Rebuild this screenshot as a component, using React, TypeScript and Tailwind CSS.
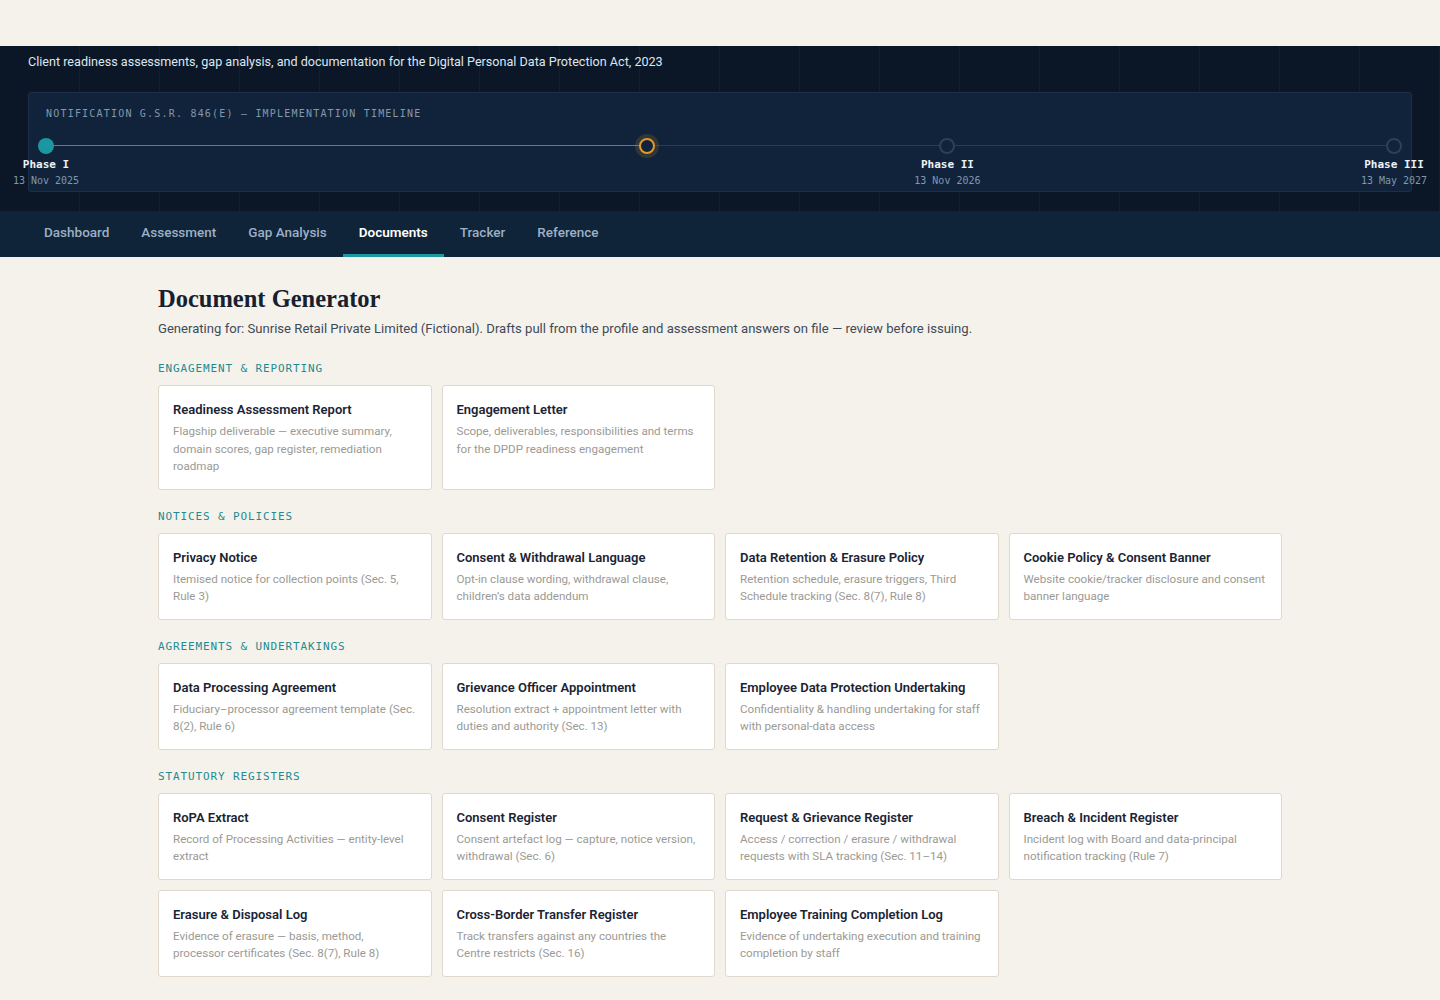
import React from 'react'

const sans = "font-['Roboto','Liberation_Sans',sans-serif]"
const mono = "font-['DejaVu_Sans_Mono','Liberation_Mono',monospace]"
const serif = "font-['Liberation_Serif','DejaVu_Serif',serif]"

const tabs = ['Dashboard', 'Assessment', 'Gap Analysis', 'Documents', 'Tracker', 'Reference']

const milestones = [
  { pos: 0, kind: 'done', label: 'Phase I', date: '13 Nov 2025' },
  { pos: 44.58, kind: 'now' },
  { pos: 66.87, kind: 'todo', label: 'Phase II', date: '13 Nov 2026' },
  { pos: 100, kind: 'todo', label: 'Phase III', date: '13 May 2027' },
]

const sections = [
  {
    label: 'Engagement & Reporting',
    docs: [
      { title: 'Readiness Assessment Report', desc: 'Flagship deliverable — executive summary, domain scores, gap register, remediation roadmap' },
      { title: 'Engagement Letter', desc: 'Scope, deliverables, responsibilities and terms for the DPDP readiness engagement' },
    ],
  },
  {
    label: 'Notices & Policies',
    docs: [
      { title: 'Privacy Notice', desc: 'Itemised notice for collection points (Sec. 5, Rule 3)' },
      { title: 'Consent & Withdrawal Language', desc: 'Opt-in clause wording, withdrawal clause, children’s data addendum' },
      { title: 'Data Retention & Erasure Policy', desc: 'Retention schedule, erasure triggers, Third Schedule tracking (Sec. 8(7), Rule 8)' },
      { title: 'Cookie Policy & Consent Banner', desc: 'Website cookie/tracker disclosure and consent banner language' },
    ],
  },
  {
    label: 'Agreements & Undertakings',
    docs: [
      { title: 'Data Processing Agreement', desc: 'Fiduciary–processor agreement template (Sec. 8(2), Rule 6)' },
      { title: 'Grievance Officer Appointment', desc: 'Resolution extract + appointment letter with duties and authority (Sec. 13)' },
      { title: 'Employee Data Protection Undertaking', desc: 'Confidentiality & handling undertaking for staff with personal-data access' },
    ],
  },
  {
    label: 'Statutory Registers',
    docs: [
      { title: 'RoPA Extract', desc: 'Record of Processing Activities — entity-level extract' },
      { title: 'Consent Register', desc: 'Consent artefact log — capture, notice version, withdrawal (Sec. 6)' },
      { title: 'Request & Grievance Register', desc: 'Access / correction / erasure / withdrawal requests with SLA tracking (Sec. 11–14)' },
      { title: 'Breach & Incident Register', desc: 'Incident log with Board and data-principal notification tracking (Rule 7)' },
      { title: 'Erasure & Disposal Log', desc: 'Evidence of erasure — basis, method, processor certificates (Sec. 8(7), Rule 8)' },
      { title: 'Cross-Border Transfer Register', desc: 'Track transfers against any countries the Centre restricts (Sec. 16)' },
      { title: 'Employee Training Completion Log', desc: 'Evidence of undertaking execution and training completion by staff' },
    ],
  },
]

function Timeline() {
  return (
    <div className="mt-[20px] rounded-[3px] border border-[#1b3048] bg-[#10233a] px-[17px] pt-[15px] pb-[4px]">
      <div className={`${mono} text-[10px] leading-[12px] tracking-[0.12em] text-[#8497ab]`}>
        NOTIFICATION G.S.R. 846(E) — IMPLEMENTATION TIMELINE
      </div>
      <div className="relative mt-[18px] h-[49px]">
        <div className="absolute left-0 right-0 top-[7px] h-px bg-[#293d54]" />
        <div className="absolute left-0 top-[7px] h-px w-[44.58%] bg-[#1d98a0]" />
        {milestones.map((m, i) => (
          <div key={i} className="absolute top-0" style={{ left: `${m.pos}%` }}>
            {m.kind === 'done' && (
              <div className="h-4 w-4 -translate-x-1/2 rounded-full bg-[#1c979f]" />
            )}
            {m.kind === 'now' && (
              <div className="-mt-1 flex h-6 w-6 -translate-x-1/2 items-center justify-center rounded-full bg-[rgba(224,154,43,0.16)]">
                <div className="h-4 w-4 rounded-full border-2 border-[#e09a2b] bg-[#10233a]" />
              </div>
            )}
            {m.kind === 'todo' && (
              <div className="h-4 w-4 -translate-x-1/2 rounded-full border-2 border-[#2c405a] bg-[#10233a]" />
            )}
            {m.label && (
              <div className={`${mono} absolute left-0 top-[20px] -translate-x-1/2 whitespace-nowrap text-center`}>
                <div className="text-[11px] font-bold leading-[14px] text-[#eef3f8]">{m.label}</div>
                <div className="mt-[3px] text-[10px] leading-[12px] text-[#7d98b2]">{m.date}</div>
              </div>
            )}
          </div>
        ))}
      </div>
    </div>
  )
}

function DocCard({ title, desc }: { title: string; desc: string }) {
  return (
    <div className="rounded-[3px] border border-[#e0d9cb] bg-white px-[14px] pt-[15px] pb-[13px]">
      <div className="text-[13px] font-semibold leading-[18px] text-[#1a2434]">{title}</div>
      <div className="mt-1 text-[11.6px] leading-[17.5px] text-[#9b9a94]">{desc}</div>
    </div>
  )
}

export default function App() {
  return (
    <div className={`${sans} min-h-screen bg-[#f5f2eb]`}>
      <div className="h-[46px]" />

      {/* Header */}
      <header className="bg-[#0b1626] bg-[linear-gradient(to_left,rgba(255,255,255,0.035)_1px,transparent_1px)] bg-[size:80px_80px] px-[28px] pt-[6px] pb-[19px]">
        <p className="text-[12.6px] leading-5 text-[#dce6f0]">
          Client readiness assessments, gap analysis, and documentation for the Digital Personal Data Protection Act, 2023
        </p>
        <Timeline />
      </header>

      {/* Tabs */}
      <nav className="flex h-[46px] bg-[#0f2339] px-[28px]">
        {tabs.map((t) => {
          const active = t === 'Documents'
          return (
            <div
              key={t}
              className={`flex items-center border-b-[3px] px-4 text-[13.5px] ${
                active ? 'border-[#1d98a0] font-semibold text-white' : 'border-transparent font-medium text-[#9db0c4]'
              }`}
            >
              {t}
            </div>
          )
        })}
      </nav>

      {/* Content */}
      <main className="mx-auto w-[1124px] pt-[26px] pb-10">
        <h1 className={`${serif} text-[24.5px] font-bold leading-8 text-[#17202e]`}>Document Generator</h1>
        <p className="mt-[4px] text-[13.1px] leading-5 text-[#3f4a58]">
          Generating for: Sunrise Retail Private Limited (Fictional). Drafts pull from the profile and assessment answers on file — review before issuing.
        </p>

        <div className="mt-[22px] flex flex-col gap-[19px]">
          {sections.map((s) => (
            <section key={s.label}>
              <div className={`${mono} text-[11px] uppercase leading-4 tracking-[0.08em] text-[#238a91]`}>{s.label}</div>
              <div className="mt-[8px] grid grid-cols-4 gap-[10px]">
                {s.docs.map((d) => (
                  <DocCard key={d.title} title={d.title} desc={d.desc} />
                ))}
              </div>
            </section>
          ))}
        </div>
      </main>
    </div>
  )
}
